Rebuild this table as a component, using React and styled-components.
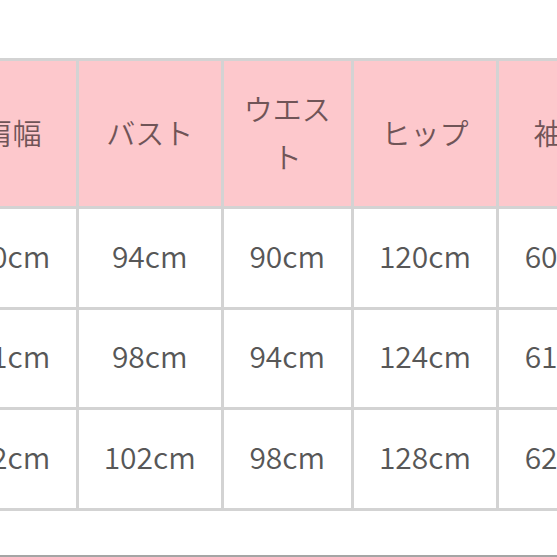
import React from 'react';
import styled, { createGlobalStyle } from "styled-components";

const GlobalStyle = createGlobalStyle`
  html, body {
    margin: 0;
    padding: 0;
    background: #ffffff;
  }
  body {
    width: 557px;
    height: 557px;
    overflow: hidden;
    font-family: "Noto Sans CJK JP", "Noto Sans", sans-serif;
  }
`;

const Page = styled.div`
  width: 557px;
  height: 557px;
  overflow: hidden;
  display: flex;
  flex-direction: column;
  padding-top: 58px;
  box-sizing: border-box;
`;

// the table is cropped on both sides in the picture
const SizeTable = styled.div`
  display: grid;
  grid-template-columns: 127px 141.5px 127.5px 142px 127px;
  grid-template-rows: 145px 98px 97px 98px;
  gap: 3px;
  padding: 3px;
  margin-left: -54px;
  width: max-content;
  background: #d3d3d3;
`;

const Cell = styled.div`
  display: flex;
  align-items: center;
  justify-content: center;
  text-align: center;
  padding: ${({ $head }) => ($head ? "0 10px 3px" : "0 8px 7px")};
  box-sizing: border-box;
  background: ${({ $head }) => ($head ? "#fdc8cc" : "#ffffff")};
  color: ${({ $head }) => ($head ? "#705457" : "#575757")};
  font-size: ${({ $head }) => ($head ? "29px" : "30px")};
  line-height: ${({ $head }) => ($head ? "48px" : "1.2")};
  font-weight: 350;
`;

const BottomRule = styled.div`
  margin-top: auto;
  height: 2px;
  background: #a5a5a5;
`;

const headers = ["肩幅", "バスト", "ウエスト", "ヒップ", "袖丈"];

const rows = [
  ["40cm", "94cm", "90cm", "120cm", "60cm"],
  ["41cm", "98cm", "94cm", "124cm", "61cm"],
  ["42cm", "102cm", "98cm", "128cm", "62cm"],
];

export default function App() {
  return (
    <>
      <GlobalStyle />
      <Page>
        <SizeTable>
          {headers.map((h) => (
            <Cell $head key={h}>{h}</Cell>
          ))}
          {rows.map((row, i) =>
            row.map((v, j) => <Cell key={i + "-" + j}>{v}</Cell>)
          )}
        </SizeTable>
        <BottomRule />
      </Page>
    </>
  );
}
